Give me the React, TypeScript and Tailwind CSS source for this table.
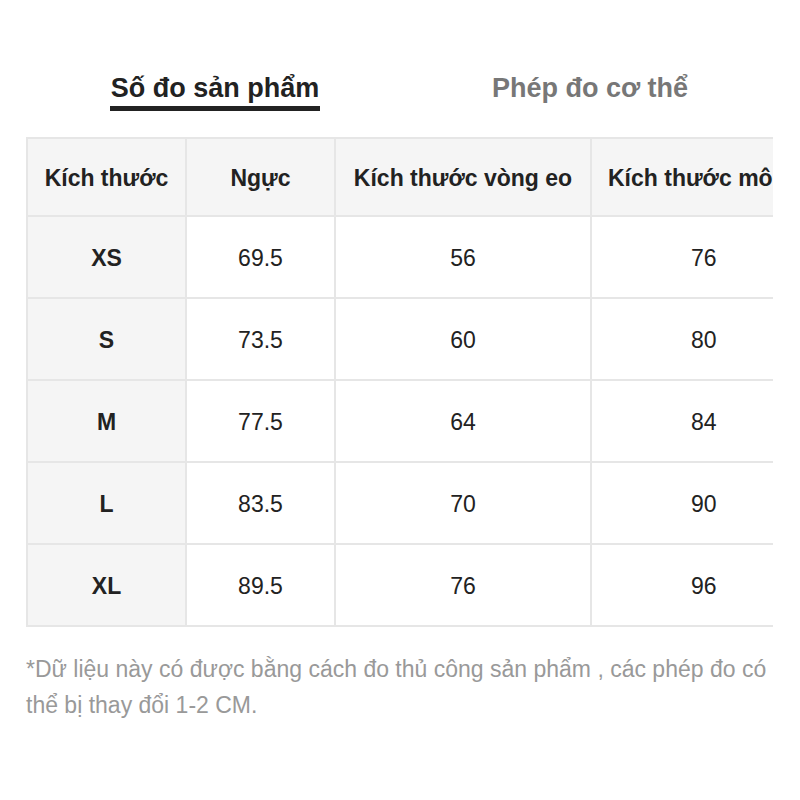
const headers = ["Kích thước", "Ngực", "Kích thước vòng eo", "Kích thước mông"];

const rows = [
  ["XS", "69.5", "56", "76"],
  ["S", "73.5", "60", "80"],
  ["M", "77.5", "64", "84"],
  ["L", "83.5", "70", "90"],
  ["XL", "89.5", "76", "96"],
];

export default function App() {
  return (
    <div className="w-[800px] h-[800px] bg-white text-[#222] font-['Liberation_Sans',Arial,sans-serif]">
      {/* Tabs */}
      <div className="flex pt-[71px] h-[137px]">
        <div className="w-[430px] flex justify-center">
          <div className="flex flex-col items-center">
            <span className="text-[27px] font-bold leading-[34px] text-[#222]">Số đo sản phẩm</span>
            <div className="h-[5px] w-[210px] bg-[#222] mt-[1px]" />
          </div>
        </div>
        <div className="flex-1 flex justify-center pr-[50px]">
          <span className="text-[27px] font-bold leading-[34px] text-[#777]">Phép đo cơ thể</span>
        </div>
      </div>

      {/* Table */}
      <div className="ml-[26px] w-[747px] overflow-hidden">
        <table className="border-collapse table-fixed w-[990px] text-[23px]">
          <colgroup>
            <col className="w-[159px]" />
            <col className="w-[149px]" />
            <col className="w-[256px]" />
            <col className="w-[426px]" />
          </colgroup>
          <thead>
            <tr className="h-[78px] bg-[#f5f5f5]">
              {headers.map((h, i) => (
                <th
                  key={i}
                  className={`border-2 border-[#e6e6e6] font-bold pt-[3px] ${i === 3 ? "text-left pl-[16px]" : "text-center"}`}
                >
                  {h}
                </th>
              ))}
            </tr>
          </thead>
          <tbody>
            {rows.map((r) => (
              <tr key={r[0]} className="h-[82px]">
                <td className="border-2 border-[#e6e6e6] bg-[#f5f5f5] text-center font-bold pt-[2px]">{r[0]}</td>
                <td className="border-2 border-[#e6e6e6] text-center pt-[2px]">{r[1]}</td>
                <td className="border-2 border-[#e6e6e6] text-center pt-[2px]">{r[2]}</td>
                <td className="border-2 border-[#e6e6e6] text-left pl-[99px] pt-[2px]">{r[3]}</td>
              </tr>
            ))}
          </tbody>
        </table>
      </div>

      {/* Note */}
      <p className="ml-[26px] mt-[24px] w-[770px] text-[23px] leading-[36px] text-[#999]">
        *Dữ liệu này có được bằng cách đo thủ công sản phẩm , các phép đo có thể bị thay đổi 1-2 CM.
      </p>
    </div>
  );
}
